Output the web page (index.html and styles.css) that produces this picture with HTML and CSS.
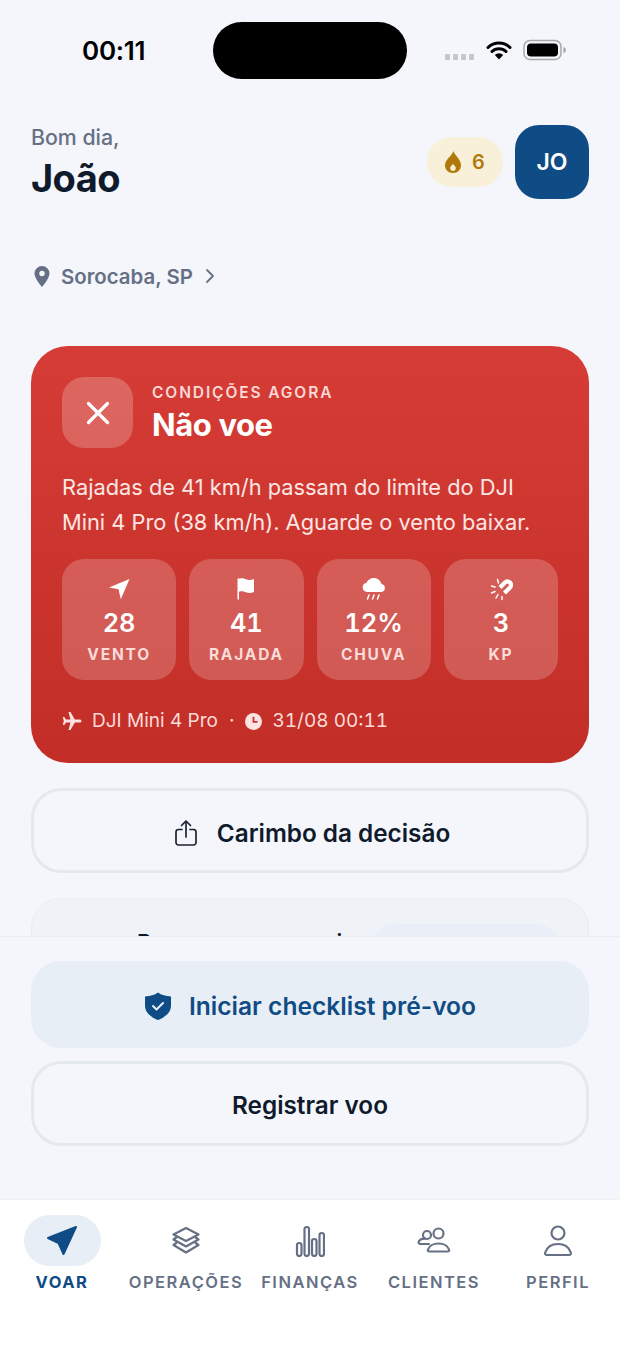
FILE: index.html
```html
<!DOCTYPE html>
<html lang="pt-BR">
<head>
<meta charset="utf-8">
<title>Voar</title>
<link rel="stylesheet" href="styles.css">
</head>
<body>
<div class="phone">
  <div class="status">
    <span class="time">00:11</span>
    <div class="island"></div>
    <div class="status-icons">
      <svg class="signal" width="30" height="6" viewBox="0 0 30 6"><rect x="0" y="0" width="5" height="6" rx="1"/><rect x="8" y="0" width="5" height="6" rx="1"/><rect x="16" y="0" width="5" height="6" rx="1"/><rect x="24" y="0" width="5" height="6" rx="1"/></svg>
      <svg width="26" height="20" viewBox="0 0 26 20"><path d="M2 7.500a15.500 15.500 0 0 1 22 0M6 11.500a10 10 0 0 1 14 0" fill="none" stroke="#000" stroke-width="3" stroke-linecap="round"/><path d="M8.800 15a6 6 0 0 1 8.400 0L13 19.500z" fill="#000"/></svg>
      <svg width="44" height="22" viewBox="0 0 44 22"><rect x="1" y="1.500" width="37" height="19" rx="6" fill="none" stroke="#a8a8a8" stroke-width="1.500"/><rect x="4" y="4.500" width="31" height="13" rx="4" fill="#000"/><path d="M40.500 8c1.500.4 2.300 1.500 2.300 3s-.8 2.600-2.300 3z" fill="#a0a0a0"/></svg>
    </div>
  </div>

  <header class="head">
    <div class="hello">
      <div class="hello-sub">Bom dia,</div>
      <div class="hello-name">João</div>
    </div>
    <div class="head-right">
      <div class="streak">
        <svg width="16" height="22" viewBox="0 0 16 22"><path d="M8.500 0c.6 4 7.500 8 7.500 14.300C16 18.800 12.700 22 8 22s-8-3.200-8-7.700C0 8.500 7 5 8.500 0zM8 13c-1.800 1.700-2.800 2.900-2.800 4.300C5.200 18.900 6.400 20 8 20s2.800-1.100 2.800-2.700C10.800 15.900 9.800 14.700 8 13z" fill="#b07a0a" fill-rule="evenodd"/></svg>
        <span>6</span>
      </div>
      <div class="avatar">JO</div>
    </div>
  </header>

  <div class="loc">
    <svg width="16" height="21" viewBox="0 0 16 21"><path d="M8 0a7.500 7.500 0 0 0-7.500 7.500C.5 12.500 8 21 8 21s7.500-8.500 7.500-13.500A7.500 7.500 0 0 0 8 0zm0 10.200a2.700 2.700 0 1 1 0-5.400 2.700 2.700 0 0 1 0 5.400z" fill="#667085" fill-rule="evenodd"/></svg>
    <span>Sorocaba, SP</span>
    <svg class="chev" width="10" height="16" viewBox="0 0 10 16"><path d="M2 2l6 6-6 6" fill="none" stroke="#667085" stroke-width="1.800" stroke-linecap="round" stroke-linejoin="round"/></svg>
  </div>

  <main class="content">
    <section class="card">
      <div class="card-top">
        <div class="x-box">
          <svg width="24" height="24" viewBox="0 0 24 24"><path d="M2.500 2.500l19 19M21.500 2.500l-19 19" fill="none" stroke="#fff" stroke-width="3.200" stroke-linecap="round"/></svg>
        </div>
        <div class="card-titles">
          <div class="eyebrow">CONDIÇÕES AGORA</div>
          <div class="verdict">Não voe</div>
        </div>
      </div>
      <p class="reason">Rajadas de 41 km/h passam do limite do DJI Mini 4 Pro (38 km/h). Aguarde o vento baixar.</p>
      <div class="stats">
        <div class="stat">
          <svg width="24" height="24" viewBox="0 0 24 24"><path d="M22.500 2L2 10.500l9.500 1.800 2.300 10z" fill="#fff"/></svg>
          <b>28</b><span>VENTO</span>
        </div>
        <div class="stat">
          <svg width="24" height="24" viewBox="0 0 24 24"><path d="M3.500 1.500h1.500v21H3.500z" fill="#fff"/><path d="M4 2c3-1.500 6-.5 8 .3 2.500 1 5 1 8-.3v13c-3 1.300-5.500 1.300-8 .3-2-.8-5-1.800-8-.3z" fill="#fff"/></svg>
          <b>41</b><span>RAJADA</span>
        </div>
        <div class="stat">
          <svg width="26" height="24" viewBox="0 0 26 24"><path d="M6 15a4.500 4.500 0 0 1-.7-8.900C6.500 3 9.500 1 12.800 1c3.800 0 7 2.600 7.700 6.100A4 4 0 0 1 20.500 15z" fill="#fff"/><path d="M8 18l-1.500 4M13 18l-1.500 4M18 18l-1.500 4" stroke="#fff" stroke-width="1.500" stroke-linecap="round" fill="none"/></svg>
          <b>12%</b><span>CHUVA</span>
        </div>
        <div class="stat">
          <svg width="24" height="24" viewBox="0 0 24 24"><path d="M11 10.500l5-5a3.500 3.500 0 0 1 5 5l-5.500 5.500" fill="none" stroke="#fff" stroke-width="4.200" stroke-linejoin="round"/><path d="M9.500 6L8.500 2.500M6 10L2.500 9M6 14.500l-3.500 1.500M9 17.500L7 21M13 19.500v3" stroke="#fff" stroke-width="1.500" stroke-linecap="round" fill="none"/></svg>
          <b>3</b><span>KP</span>
        </div>
      </div>
      <div class="meta">
        <svg width="20" height="18" viewBox="0 0 20 18"><path d="M19.500 9c0-1-1-1.600-2-1.600h-4.700L8.500 0H6.500l2 7.400H4L2.300 5H.8l1 4-1 4h1.500L4 10.600h4.500l-2 7.400h2l4.300-7.400h4.700c1 0 2-.6 2-1.600z" fill="#fbe3e1"/></svg>
        <span class="meta-text">DJI Mini 4 Pro</span>
        <span class="meta-dot">·</span>
        <svg width="17" height="17" viewBox="0 0 17 17"><circle cx="8.500" cy="8.500" r="8.500" fill="#fbe3e1"/><path d="M8.500 3.800v5h4" fill="none" stroke="#c9302a" stroke-width="1.800"/></svg>
        <span class="meta-text meta-date">31/08 00:11</span>
      </div>
    </section>

    <button class="btn btn-outline btn-stamp">
      <svg width="24" height="28" viewBox="0 0 24 28"><path d="M12 18V2M7.500 6.500L12 2l4.500 4.500" fill="none" stroke="#1a2433" stroke-width="1.700" stroke-linecap="round" stroke-linejoin="round"/><path d="M8 10.500H4.500a2.500 2.500 0 0 0-2.500 2.500v10.500A2.500 2.500 0 0 0 4.500 26h15a2.500 2.500 0 0 0 2.500-2.500V13a2.500 2.500 0 0 0-2.500-2.500H16" fill="none" stroke="#1a2433" stroke-width="1.700" stroke-linecap="round"/></svg>
      <span>Carimbo da decisão</span>
    </button>

    <section class="peek">
      <span class="peek-title">Bom para voar aqui</span>
      <span class="peek-pill"></span>
    </section>
  </main>

  <div class="actions">
    <button class="btn btn-primary">
      <svg width="28" height="28" viewBox="0 0 28 28"><path d="M14 .5c3.500 2.600 7.500 3.700 13 4v9c0 7-5.500 11.500-13 14.500C6.500 25 1 20.500 1 13.500v-9c5.500-.3 9.500-1.400 13-4z" fill="#0f4c85"/><path d="M9 14l3.500 3.500L19 11" fill="none" stroke="#e8eef6" stroke-width="2" stroke-linecap="round" stroke-linejoin="round"/></svg>
      <span>Iniciar checklist pré-voo</span>
    </button>
    <button class="btn btn-outline btn-log"><span>Registrar voo</span></button>
  </div>

  <nav class="tabs">
    <div class="tab tab-on">
      <div class="tab-icon">
        <svg width="32" height="32" viewBox="0 0 32 32"><path d="M30 2L2 13l10.500 5 5 11z" fill="#0f4c85" stroke="#0f4c85" stroke-width="2" stroke-linejoin="round"/></svg>
      </div>
      <span>VOAR</span>
    </div>
    <div class="tab">
      <div class="tab-icon">
        <svg width="30" height="30" viewBox="0 0 30 30" fill="none" stroke="#667085" stroke-width="2.200" stroke-linejoin="round"><path d="M15 2l12.500 6.500L15 15 2.500 8.500z"/><path d="M6 11L2.500 13.500 15 20.500l12.500-7L24 11"/><path d="M6 16.500L2.500 19 15 26.500 27.500 19 24 16.500"/></svg>
      </div>
      <span>OPERAÇÕES</span>
    </div>
    <div class="tab">
      <div class="tab-icon">
        <svg width="30" height="32" viewBox="0 0 30 32" fill="none" stroke="#667085" stroke-width="2.200"><rect x="2" y="18" width="4.500" height="13" rx="2.200"/><rect x="9.500" y="2" width="4.500" height="29" rx="2.200"/><rect x="17" y="14" width="4.500" height="17" rx="2.200"/><rect x="24.500" y="8" width="4.500" height="23" rx="2.200"/></svg>
      </div>
      <span>FINANÇAS</span>
    </div>
    <div class="tab">
      <div class="tab-icon">
        <svg width="34" height="28" viewBox="0 0 34 28" fill="none" stroke="#667085" stroke-width="2.200" stroke-linecap="round" stroke-linejoin="round"><circle cx="10" cy="8" r="4"/><circle cx="21.500" cy="6.500" r="5"/><path d="M12 17H3a2 2 0 0 1-1.500-1.500c.5-2.500 3.500-3.800 6.500-3.800"/><path d="M12.300 24.500c-1.300 0-1.800-.8-1.300-2 1.200-3.600 5.500-6 10.500-6s9.300 2.400 10.500 6c.5 1.200 0 2-1.300 2z"/></svg>
      </div>
      <span>CLIENTES</span>
    </div>
    <div class="tab">
      <div class="tab-icon">
        <svg width="30" height="32" viewBox="0 0 30 32" fill="none" stroke="#667085" stroke-width="2.200" stroke-linejoin="round"><circle cx="15" cy="8" r="6.500"/><path d="M4 30c-1.500 0-2.300-1-1.800-2.500C4 22 9 19 15 19s11 3 12.800 8.500c.5 1.500-.3 2.500-1.800 2.500z"/></svg>
      </div>
      <span>PERFIL</span>
    </div>
  </nav>
</div>
</body>
</html>
```
FILE: styles.css
```css
* { box-sizing: border-box; }
html, body { margin: 0; padding: 0; }
body { font-family: "Inter", "Noto Sans", sans-serif; background: #f4f6fb; color: #0f1a2b; }
.phone { position: relative; width: 620px; height: 1349px; overflow: hidden; background: #f4f6fb; }

.status { height: 125px; padding-top: 22px; display: flex; align-items: flex-start; }
.time { width: 213px; padding-top: 15px; padding-left: 82px; font-size: 26px; line-height: 28px; font-weight: 600; color: #000; letter-spacing: -.25px; }
.island { width: 194px; height: 57px; border-radius: 29px; background: #000; }
.status-icons { display: flex; align-items: center; margin-left: 38px; margin-top: 17px; gap: 11px; }
.signal { fill: #c4c6ca; margin-top: 14px; }

.head { padding: 0 31px; display: flex; justify-content: space-between; align-items: flex-start; }
.hello-sub { font-size: 21.300px; line-height: 24px; font-weight: 500; color: #667085; }
.hello-name { font-size: 38px; line-height: 50px; font-weight: 700; color: #0f1a2b; letter-spacing: -.6px; margin-top: 4px; }
.head-right { display: flex; align-items: center; gap: 12px; }
.streak { width: 76px; height: 50px; border-radius: 25px; background: #f8f0d9; display: flex; align-items: center; justify-content: center; gap: 11px; color: #b07a0a; font-size: 20px; font-weight: 600; }
.avatar { width: 74px; height: 74px; border-radius: 24px; background: #0f4c85; color: #fff; display: flex; align-items: center; justify-content: center; font-size: 23px; font-weight: 600; }

.loc { margin-top: 59px; padding-left: 34px; height: 28px; display: flex; align-items: center; gap: 11px; color: #667085; font-size: 20.400px; font-weight: 600; }
.chev { margin-left: 1px; }

.content { padding: 56px 31px 0; display: flex; flex-direction: column; gap: 25px; }
.card { height: 417px; border-radius: 37px; background: linear-gradient(180deg, #d63c36 0%, #c22e27 100%); padding: 31px; color: #fff; }
.card-top { display: flex; gap: 19px; align-items: center; }
.card-titles { padding-top: 3px; }
.x-box { width: 71px; height: 71px; border-radius: 22px; background: rgba(255,255,255,.22); display: flex; align-items: center; justify-content: center; }
.eyebrow { font-size: 15.500px; line-height: 20px; font-weight: 600; letter-spacing: 1.900px; color: #fbd9d6; }
.verdict { font-size: 31px; line-height: 40px; font-weight: 700; letter-spacing: -.4px; margin-top: 2px; }
.reason { margin: 22px 0 0; font-size: 21.800px; line-height: 35px; color: #fde6e4; }
.stats { margin-top: 19px; display: grid; grid-template-columns: repeat(4, 1fr); gap: 13px; }
.stat { height: 121px; border-radius: 22px; background: rgba(255,255,255,.2); display: flex; flex-direction: column; align-items: center; padding-top: 18px; }
.stat svg { height: 24px; }
.stat b { font-size: 25.500px; line-height: 30px; font-weight: 600; margin-top: 7px; font-variant-numeric: tabular-nums; }
.stat span { font-size: 15.500px; line-height: 20px; font-weight: 700; letter-spacing: 1.800px; color: #fbdcd9; margin-top: 7px; }
.meta { margin-top: 29px; display: flex; align-items: center; color: #fbdcd9; font-size: 19px; line-height: 24px; }
.meta-text { margin-left: 10px; }
.meta-date { font-variant-numeric: tabular-nums; }
.meta-dot { margin: 0 11px; }

.btn { width: 100%; height: 85px; flex: none; border-radius: 30px; display: flex; align-items: center; justify-content: center; gap: 19px; font-family: inherit; font-size: 24.300px; font-weight: 600; padding: 4px 0 0; }
.btn-outline { background: #f4f6fb; border: 3px solid #e4e8ef; color: #0f1a2b; }
.btn-stamp { padding-left: 4px; }
.btn-log { padding-top: 2px; }
.btn-primary { height: 87px; background: #e8eef6; border: 0; color: #0f4c85; gap: 17px; font-size: 24.600px; padding-top: 2px; }

.peek { height: 120px; border-radius: 30px; background: #eff2f6; border: 1px solid #e9edf3; display: flex; align-items: flex-start; padding: 30px 30px 0 105px; justify-content: space-between; }
.peek-title { font-size: 22px; font-weight: 600; color: #0f1a2b; line-height: 26px; }
.peek-pill { width: 186px; height: 60px; border-radius: 22px; background: #eaeff7; margin-top: -5px; }

.actions { position: absolute; left: 0; right: 0; top: 936px; height: 263px; background: #f4f6fb; border-top: 1px solid #e9ecf2; padding: 24px 31px 0; display: flex; flex-direction: column; gap: 13px; }

.tabs { position: absolute; left: 0; right: 0; top: 1199px; height: 150px; background: #fff; border-top: 1px solid #eef0f4; display: flex; padding-top: 15px; }
.tab { width: 124px; display: flex; flex-direction: column; align-items: center; color: #667085; font-size: 16.500px; font-weight: 600; letter-spacing: 1.500px; }
.tab-icon { width: 77px; height: 51px; border-radius: 26px; display: flex; align-items: center; justify-content: center; }
.tab-on .tab-icon { background: #e8eef6; }
.tab-on { color: #0f4c85; font-weight: 700; }
.tab span { margin-top: 5px; line-height: 22px; white-space: nowrap; }
```
